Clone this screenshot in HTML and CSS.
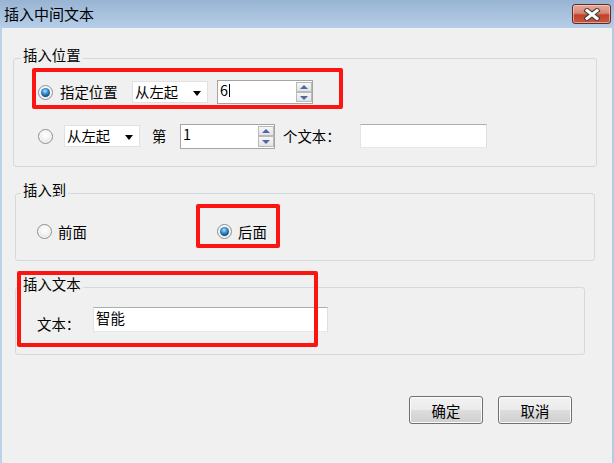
FILE: index.html
```html
<!DOCTYPE html>
<html lang="zh-CN">
<head>
<meta charset="utf-8">
<title>插入中间文本</title>
<link rel="stylesheet" href="styles.css">
</head>
<body>
<div class="window">
  <header class="titlebar">
    <span class="title">插入中间文本</span>
    <button class="close" aria-label="关闭">
      <svg width="18" height="13" viewBox="0 0 18 13">
        <path d="M4 2.5 L14 10.5 M14 2.5 L4 10.5" stroke="#3a3a3a" stroke-width="5" stroke-linecap="square" fill="none"/>
        <path d="M4 2.5 L14 10.5 M14 2.5 L4 10.5" stroke="#ffffff" stroke-width="3" stroke-linecap="square" fill="none"/>
      </svg>
    </button>
  </header>
  <main class="client">
    <fieldset class="group g1">
      <legend>插入位置</legend>
      <div class="row r1">
        <span class="radio checked"></span>
        <span class="lbl l-spec">指定位置</span>
        <span class="combo c1">从左起<i class="arrow"></i></span>
        <span class="spin s1"><span class="val">6<i class="caret"></i></span><span class="spinbtns"><i class="sb up"></i><i class="sb down"></i></span></span>
      </div>
      <div class="row r2">
        <span class="radio"></span>
        <span class="combo c2">从左起<i class="arrow"></i></span>
        <span class="lbl l-di">第</span>
        <span class="spin s2"><span class="val">1</span><span class="spinbtns"><i class="sb up"></i><i class="sb down"></i></span></span>
        <span class="lbl l-ge">个文本：</span>
        <span class="edit e1"></span>
      </div>
    </fieldset>

    <fieldset class="group g2">
      <legend>插入到</legend>
      <div class="row r3">
        <span class="option o1"><span class="radio"></span><span class="lbl">前面</span></span>
        <span class="option"><span class="radio checked"></span><span class="lbl">后面</span></span>
      </div>
    </fieldset>

    <fieldset class="group g3">
      <legend>插入文本</legend>
      <div class="row r4">
        <span class="lbl l-text">文本：</span>
        <span class="edit e2">智能</span>
      </div>
    </fieldset>

    <div class="buttons">
      <button class="btn">确定</button>
      <button class="btn">取消</button>
    </div>
  </main>

  <div class="mark m1"></div>
  <div class="mark m2"></div>
  <div class="mark m3"></div>
</div>
</body>
</html>
```
FILE: styles.css
```css
* { box-sizing: border-box; }

html, body {
  margin: 0;
  padding: 0;
  background: #f0f0f0;
}

body {
  font-family: "Noto Sans CJK SC", "Noto Sans", sans-serif;
  font-size: 14.4px;
  color: #000;
}

.window {
  position: relative;
  width: 614px;
  height: 463px;
  overflow: hidden;
}

/* ---------- title bar ---------- */
.titlebar {
  height: 28px;
  display: flex;
  align-items: flex-start;
  justify-content: space-between;
  background: linear-gradient(#98b4d3, #b6cee8);
  padding: 0 3px 0 4px;
}

.title {
  font-size: 15px;
  line-height: 28px;
  color: #000;
}

.close {
  margin-top: 4px;
  width: 39px;
  height: 20px;
  padding: 0;
  border: 1px solid #5e2a2a;
  border-radius: 3px;
  background: linear-gradient(#e7a899 0%, #d88878 45%, #c0432c 55%, #c9573f 100%);
  box-shadow: inset 0 0 0 1px rgba(255, 220, 210, 0.55);
  display: flex;
  align-items: center;
  justify-content: center;
}

/* ---------- client area ---------- */
.client {
  height: 435px;
  background: #f0f0f0;
  border-left: 2px solid #bcd2ea;
  border-right: 2px solid #b4cbe4;
  display: flex;
  flex-direction: column;
  align-items: flex-start;
}

.group {
  margin: 0;
  padding: 0;
  border: 1px solid #d0dae2;
  border-radius: 3px;
  min-width: 0;
}

.group legend {
  padding: 0 2px 6px;
  line-height: 14px;
  font-size: 14.4px;
}

.g1 { margin: 20px 0 0 11px; width: 584px; }
.g1 legend { margin-left: 7px; }

.g2 { margin: 16px 0 0 13px; width: 580px; }
.g2 legend { margin-left: 5px; }

.g3 { margin: 16px 0 0 13px; width: 570px; }
.g3 legend { margin-left: 5px; }

.row {
  display: flex;
  align-items: center;
}

.lbl {
  line-height: 20px;
  white-space: nowrap;
}

/* group 1 rows */
.r1 { height: 48px; padding-left: 24px; }
.r2 { height: 40px; padding-left: 24px; margin-bottom: 10px; }

.l-spec { width: 72px; margin-left: 7px; }
.l-di { width: 28px; margin-left: 12px; }
.l-ge { width: 77px; margin-left: 8px; }

/* radio */
.radio {
  position: relative;
  flex: none;
  width: 15px;
  height: 15px;
  border-radius: 50%;
  border: 1px solid #8c8e90;
  background: radial-gradient(circle at 50% 40%, #ffffff 0%, #f2f2f2 45%, #d4d4d4 100%);
  box-shadow: inset 0 0 0 1px #fbfbfb;
}

.radio.checked::after {
  content: "";
  position: absolute;
  left: 2px;
  top: 2px;
  width: 9px;
  height: 9px;
  border-radius: 50%;
  background: radial-gradient(circle at 45% 35%, #b7e3fb 0%, #3d95d3 35%, #0d4f87 70%, #082f57 100%);
}

/* combo */
.combo {
  position: relative;
  flex: none;
  width: 76px;
  height: 22px;
  padding-left: 2px;
  line-height: 20px;
  background: #fff;
  border: 1px solid #e1e1e1;
}

.c2 { margin-left: 11px; }

.arrow {
  position: absolute;
  right: 6px;
  top: 9px;
  width: 0;
  height: 0;
  border-left: 4px solid transparent;
  border-right: 4px solid transparent;
  border-top: 5px solid #000;
}

/* spin */
.spin {
  flex: none;
  display: flex;
  align-items: stretch;
  justify-content: space-between;
  background: #fff;
  border: 1px solid #a5a5a5;
}

.s1 { width: 96px; height: 24px; margin-left: 9px; }
.s2 { width: 95px; height: 25px; }

.val {
  padding-left: 2px;
  line-height: 18px;
  display: flex;
  align-items: center;
  height: 18px;
}

.caret {
  display: inline-block;
  width: 1px;
  height: 13px;
  margin-left: 1px;
  background: #000;
}

.spinbtns {
  width: 16px;
  display: flex;
  flex-direction: column;
  padding: 1px 0;
}

.sb {
  position: relative;
  flex: 1;
  border: 1px solid #b9b9b9;
  background: linear-gradient(#f6f6f6, #e3e3e3);
}

.sb::after {
  content: "";
  position: absolute;
  left: 3px;
  width: 0;
  height: 0;
  border-left: 4px solid transparent;
  border-right: 4px solid transparent;
}

.sb.up::after { top: 2px; border-bottom: 4px solid #4d67ad; }
.sb.down::after { top: 3px; border-top: 4px solid #4d67ad; }

/* edit */
.edit {
  flex: none;
  background: #fff;
  border: 1px solid #e3e9ef;
  border-top-color: #abadb3;
  border-left-color: #e2e3ea;
  border-right-color: #dbdfe6;
}

.e1 { width: 127px; height: 24px; }

/* group 2 */
.r3 { height: 57px; padding-left: 21px; }

.option {
  display: flex;
  align-items: center;
  gap: 6px;
}

.o1 { width: 180px; }

/* group 3 */
.r4 {
  align-items: flex-start;
  padding: 10px 0 20px 21px;
}

.l-text {
  width: 56px;
  padding-top: 7px;
}

.e2 {
  width: 235px;
  height: 25px;
  padding: 0 0 0 2px;
  line-height: 20px;
}

/* buttons */
.buttons {
  align-self: stretch;
  display: flex;
  justify-content: flex-end;
  gap: 15px;
  margin-top: 41px;
  padding-right: 40px;
}

.btn {
  width: 74px;
  height: 28px;
  padding: 0;
  font-family: inherit;
  font-size: 14.4px;
  color: #000;
  border: 1px solid #707070;
  border-radius: 3px;
  background: linear-gradient(#f2f2f2 0%, #ebebeb 50%, #dddddd 51%, #cfcfcf 100%);
  box-shadow: inset 0 0 0 1px #fbfbfb;
}

/* red annotation marks drawn over the dialog */
.mark {
  position: absolute;
  border: 4px solid #fb1410;
  border-radius: 2px;
}

.m1 { left: 32px; top: 68px; width: 311px; height: 41px; }
.m2 { left: 196px; top: 204px; width: 84px; height: 44px; }
.m3 { left: 17px; top: 271px; width: 301px; height: 76px; }
```
